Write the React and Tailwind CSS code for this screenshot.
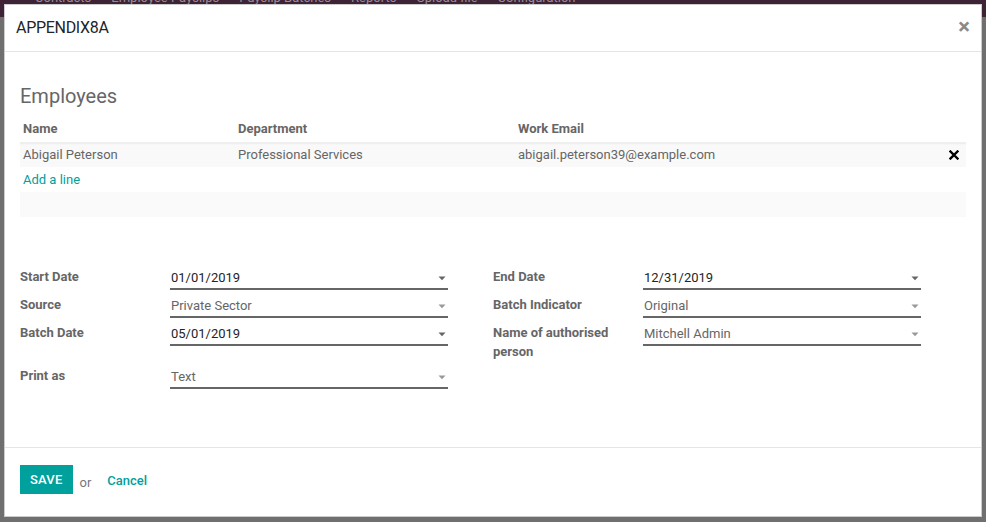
import React from "react";

const Caret = ({ dark }) => (
  <svg width="8" height="5" viewBox="0 0 8 5" className="shrink-0">
    <path d="M0.5 0.5 L7.5 0.5 L4 4.2 Z" fill={dark ? "#666666" : "#999999"} />
  </svg>
);

const Field = ({ value, dark }) => (
  <div className="w-[278px] h-[22px] flex items-center justify-between border-b-2 border-[#666666] pl-[1px] pr-[2px]">
    <span className={dark ? "text-[13px] leading-[20px] text-[#212529]" : "text-[13px] leading-[20px] text-[#666666]"}>{value}</span>
    <Caret dark={dark} />
  </div>
);

const Row = ({ label, children }) => (
  <div className="flex items-start">
    <div className="w-[150px] pr-2 text-[13px] leading-[19px] font-bold text-[#666666] -mt-[1px]">{label}</div>
    {children}
  </div>
);

export default function App() {
  return (
    <div className="relative w-[986px] h-[522px] bg-[#6f6f6f] overflow-hidden" style={{ fontFamily: "Roboto, 'Noto Sans', sans-serif" }}>
      <div className="h-[17px] bg-[#3e2336] flex items-start overflow-hidden">
        <div className="flex gap-[20px] pl-[35px] text-[13px] leading-[13px] text-[#9a8c97] -mt-[9px]">
          <span>Contracts</span>
          <span>Employee Payslips</span>
          <span>Payslip Batches</span>
          <span>Reports</span>
          <span>Upload file</span>
          <span>Configuration</span>
        </div>
      </div>

      <div className="absolute left-[4px] top-[4px] w-[978px] h-[513px] bg-white border border-black/20 flex flex-col">
        <div className="h-[47px] shrink-0 flex items-center justify-between pl-[11px] pr-[11px] border-b border-[#e5e5e5]">
          <span className="text-[16px] text-[#212529] tracking-[-0.3px]">APPENDIX8A</span>
          <span className="text-[22px] leading-none font-bold text-[#8a8a8a] -mt-[2px]">×</span>
        </div>

        <div className="flex-1 px-[15px] pt-[32px]">
          <div className="text-[20px] leading-[24px] text-[#666666]">Employees</div>

          <div className="mt-[8px] w-[946px]">
            <div className="flex h-[26px] items-center text-[13px] font-bold text-[#666666]">
              <div className="w-[215px] pl-[3px]">Name</div>
              <div className="w-[280px] pl-[3px]">Department</div>
              <div className="flex-1 pl-[3px]">Work Email</div>
            </div>
            <div className="flex h-[25px] items-center text-[13px] text-[#666666] bg-[#f9f9f9] shadow-[inset_0_2px_2px_-1px_rgba(0,0,0,0.06)] border-t border-[#efefef]">
              <div className="w-[215px] pl-[3px]">Abigail Peterson</div>
              <div className="w-[280px] pl-[3px]">Professional Services</div>
              <div className="flex-1 pl-[3px]">abigail.peterson39@example.com</div>
              <div className="w-[20px] flex justify-center pr-[4px]">
                <svg width="10" height="10" viewBox="0 0 10 10">
                  <path d="M1.5 1.5 L8.5 8.5 M8.5 1.5 L1.5 8.5" stroke="#000" strokeWidth="2.4" strokeLinecap="square" />
                </svg>
              </div>
            </div>
            <div className="h-[25px] flex items-center pl-[3px] text-[13px] text-[#00a09d]">Add a line</div>
            <div className="h-[25px] bg-[#fafafa]"></div>
          </div>

          <div className="mt-[51px] grid grid-cols-2 w-[946px]">
            <div className="flex flex-col gap-y-[6px]">
              <Row label="Start Date"><Field value="01/01/2019" dark /></Row>
              <Row label="Source"><Field value="Private Sector" /></Row>
              <Row label="Batch Date"><Field value="05/01/2019" dark /></Row>
              <div className="h-[9px]"></div>
              <Row label="Print as"><Field value="Text" /></Row>
            </div>
            <div className="flex flex-col gap-y-[6px]">
              <Row label="End Date"><Field value="12/31/2019" dark /></Row>
              <Row label="Batch Indicator"><Field value="Original" /></Row>
              <Row label={<>Name of authorised<br />person</>}><Field value="Mitchell Admin" /></Row>
            </div>
          </div>
        </div>

        <div className="h-[69px] shrink-0 border-t border-[#e5e5e5] flex items-start pt-[17px] pl-[15px]">
          <button className="h-[29px] px-[10px] bg-[#00a09d] text-white text-[13px] font-medium tracking-[0.2px]">SAVE</button>
          <span className="ml-[7px] mt-[8px] text-[13px] text-[#777777]">or</span>
          <span className="ml-[16px] mt-[6px] text-[13px] font-medium text-[#00a09d]">Cancel</span>
        </div>
      </div>
    </div>
  );
}
